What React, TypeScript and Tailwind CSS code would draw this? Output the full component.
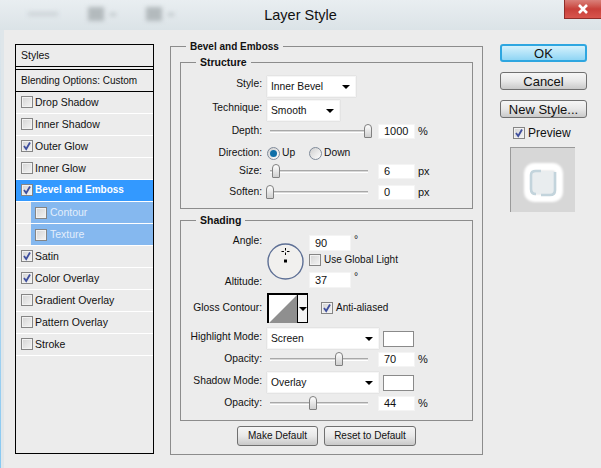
import type { ReactNode } from 'react';

const font = { fontFamily: '"Liberation Sans", Arial, sans-serif' };

const Check = ({ on = false }: { on?: boolean }) => (
  <span className="flex h-[12px] w-[12px] shrink-0 items-center justify-center border border-[#858585] bg-gradient-to-br from-[#d4d4d4] to-[#f4f4f4] shadow-[inset_0_0_0_1px_#f2f2f2]">
    {on && (
      <svg viewBox="0 0 10 10" className="h-[10px] w-[10px]">
        <path d="M2 5 L4.2 8 L8 1.5" fill="none" stroke="#3f4f9e" strokeWidth="1.8" />
      </svg>
    )}
  </span>
);

const StyleRow = ({ label, on, kind }: { label: string; on?: boolean; kind?: 'active' | 'sub' }) => {
  if (kind === 'sub') {
    return (
      <div className="h-[22px] border-b border-white pl-[15px]">
        <div className="flex h-[21px] items-center gap-[3px] bg-[#85b8ef] pl-[4px] text-[#e3eefb]">
          <Check />
          <span>{label}</span>
        </div>
      </div>
    );
  }
  return (
    <div
      className={
        kind === 'active'
          ? 'flex h-[22px] items-center gap-[2px] border-b border-white bg-[#3399ff] pb-[1px] pl-[5px] text-[10px] font-bold text-white'
          : 'flex h-[22px] items-center gap-[2px] border-b border-white pb-[1px] pl-[5px]'
      }
    >
      <Check on={on} />
      <span>{label}</span>
    </div>
  );
};

const Panel = ({ title, className, children, titleSize = 'text-[10.5px]' }: { title: string; className: string; children: ReactNode; titleSize?: string }) => (
  <div className={`border border-[#8c8c8c] ${className}`}>
    <div className={`ml-[15px] -mt-[8px] h-[15px] w-fit bg-[#ececec] px-[4px] font-bold leading-[15px] ${titleSize}`}>{title}</div>
    {children}
  </div>
);

const Label = ({ children, className = '' }: { children: ReactNode; className?: string }) => (
  <span className={`mr-[5px] w-[81px] shrink-0 whitespace-nowrap text-right ${className}`}>{children}</span>
);

const Arrow = () => (
  <svg viewBox="0 0 8 4" className="h-[4px] w-[8px] shrink-0">
    <path d="M0 0 H8 L4 4 Z" fill="#000" />
  </svg>
);

const Select = ({ value, className }: { value: string; className: string }) => (
  <div className={`flex items-center justify-between border border-[#f6f6f6] bg-white pl-[3px] pr-[5px] pt-[1px] shadow-[0_0_1px_#bbb] ${className}`}>
    <span>{value}</span>
    <Arrow />
  </div>
);

const NumberBox = ({ value, className = 'ml-[10px] w-[37px]' }: { value: string; className?: string }) => (
  <div className={`flex h-[15px] items-center border border-[#f4f4f4] bg-white pl-[5px] text-[11px] ${className}`}>{value}</div>
);

const Slider = ({ percent }: { percent: number }) => (
  <div className="relative ml-[3px] h-[3px] w-[98px] border-y border-y-[#a8a8a8] border-b-white bg-[#d8d8d8]">
    <span
      className="absolute -top-[7px] h-[14px] w-[8px] -translate-x-1/2 rounded-t-[4px] rounded-b-[1px] border border-[#808080] bg-gradient-to-b from-white to-[#cfcfcf]"
      style={{ left: `${percent}%` }}
    />
  </div>
);

const SliderRow = ({ label, percent, value, unit, className }: { label: string; percent: number; value: string; unit: string; className: string }) => (
  <div className={`flex h-[15px] items-center ${className}`}>
    <Label>{label}</Label>
    <Slider percent={percent} />
    <NumberBox value={value} />
    <span className="ml-[3px] text-[11px]">{unit}</span>
  </div>
);

const Radio = ({ on = false }: { on?: boolean }) => (
  <span className="flex h-[13px] w-[13px] items-center justify-center rounded-full border border-[#7f8a99] bg-gradient-to-br from-[#cfcfcf] to-white">
    {on && <span className="h-[7px] w-[7px] rounded-full bg-[#0f6fa8]" />}
  </span>
);

const PushButton = ({ children, className, primary }: { children: ReactNode; className: string; primary?: boolean }) => (
  <div
    className={
      primary
        ? `flex items-center justify-center rounded-[3px] border-2 border-[#2ea6e0] bg-gradient-to-b from-[#d4f1fc] to-[#8fd5f4] ${className}`
        : `flex items-center justify-center rounded-[3px] border border-[#707070] bg-gradient-to-b from-[#f6f6f6] via-[#e8e8e8] to-[#c9c9c9] ${className}`
    }
  >
    {children}
  </div>
);

export default function App() {
  return (
    <div className="flex h-[468px] w-[601px] flex-col overflow-hidden bg-[#dfe6ea] text-[10.3px] leading-none text-[#111]" style={font}>
      <div className="relative flex h-[30px] shrink-0 items-center justify-center bg-gradient-to-b from-[#e9eef1] to-[#dbe3e7] text-[14.5px]">
        <div className="absolute left-[28px] top-[7px] flex items-center gap-[30px] blur-[2px]">
          <span className="h-[4px] w-[30px] bg-[#ccd3d7]" />
          <span className="h-[14px] w-[16px] bg-[#b3babd]" />
          <span className="-ml-[24px] h-[3px] w-[6px] bg-[#bcc4c8]" />
          <span className="h-[14px] w-[16px] bg-[#b3babd]" />
          <span className="-ml-[24px] h-[3px] w-[6px] bg-[#bcc4c8]" />
        </div>
        <span>Layer Style</span>
        <div className="absolute right-0 top-0 flex h-[19px] w-[37px] items-center justify-center border-b border-l border-[#8f2e2a] bg-gradient-to-b from-[#d9807a] via-[#c8403a] to-[#d8554d]">
          <svg viewBox="0 0 12 10" className="h-[10px] w-[12px]">
            <path d="M2 1 L10 9 M10 1 L2 9" stroke="#fff" strokeWidth="2.6" />
          </svg>
        </div>
      </div>

      <div className="flex flex-1 bg-gradient-to-b from-[#dfe6ea] to-[#86c8f2] pl-[1px]">
        <div className="flex flex-1 border-l-[3px] border-[#dfe6ea] bg-[#ececec] pl-[11px]">
          <div className="mt-[14px] h-[410px] w-[139px] shrink-0 border border-black text-[10.5px]">
            <div className="flex h-[22px] items-center border-b border-black pl-[5px]">Styles</div>
            <div className="mt-[2px] flex h-[23px] items-center whitespace-nowrap border-y border-black pl-[5px] text-[10px]">Blending Options: Custom</div>
            <StyleRow label="Drop Shadow" />
            <StyleRow label="Inner Shadow" />
            <StyleRow label="Outer Glow" on />
            <StyleRow label="Inner Glow" />
            <StyleRow label="Bevel and Emboss" on kind="active" />
            <StyleRow label="Contour" kind="sub" />
            <StyleRow label="Texture" kind="sub" />
            <StyleRow label="Satin" on />
            <StyleRow label="Color Overlay" on />
            <StyleRow label="Gradient Overlay" />
            <StyleRow label="Pattern Overlay" />
            <StyleRow label="Stroke" />
          </div>

          <Panel title="Bevel and Emboss" titleSize="text-[10px]" className="ml-[16px] mt-[16px] h-[409px] w-[313px] shrink-0 border-b">
            <div className="ml-[9px] mt-[8px] w-[293px]">
              <Panel title="Structure" className="h-[147px]">
                <div className="mt-[6px] flex h-[21px] items-center">
                  <Label className="mb-[4px]">Style:</Label>
                  <Select value="Inner Bevel" className="h-[21px] w-[89px]" />
                </div>
                <div className="mt-[3px] flex h-[21px] items-center">
                  <Label className="mb-[4px]">Technique:</Label>
                  <Select value="Smooth" className="h-[21px] w-[73px]" />
                </div>
                <SliderRow label="Depth:" percent={100} value="1000" unit="%" className="mt-[3px]" />
                <div className="mt-[6px] flex h-[16px] items-center">
                  <Label>Direction:</Label>
                  <Radio on />
                  <span className="ml-[2px] w-[27px]">Up</span>
                  <Radio />
                  <span className="ml-[2px]">Down</span>
                </div>
                <SliderRow label="Size:" percent={6} value="6" unit="px" className="mt-[3px]" />
                <SliderRow label="Soften:" percent={0} value="0" unit="px" className="mt-[6px]" />
              </Panel>

              <Panel title="Shading" className="mt-[11px] h-[201px]">
                <div className="mt-[7px] flex h-[53px]">
                  <div className="mr-[4px] flex w-[81px] flex-col justify-between py-[1px] text-right">
                    <span>Angle:</span>
                    <span>Altitude:</span>
                  </div>
                  <svg viewBox="0 0 37 37" className="ml-[1px] mt-[8px] h-[37px] w-[37px] shrink-0">
                    <circle cx="18.5" cy="18.5" r="17.5" fill="#f1f0ee" stroke="#5d6f95" strokeWidth="1.4" />
                    <path d="M18.5 5v2.5M18.5 9.5v2.5M14.5 8.5h2.5M20 8.5h2.5" stroke="#000" strokeWidth="1" />
                    <rect x="17" y="16.5" width="3" height="3" fill="#000" />
                  </svg>
                  <div className="ml-[5px] flex flex-col">
                    <div className="flex items-start">
                      <NumberBox value="90" className="h-[16px] w-[42px]" />
                      <span className="ml-[3px]">°</span>
                    </div>
                    <div className="mt-[3px] flex items-center gap-[3px] text-[10px]">
                      <Check />
                      <span>Use Global Light</span>
                    </div>
                    <div className="mt-[6px] flex items-start">
                      <NumberBox value="37" className="h-[16px] w-[42px]" />
                      <span className="ml-[3px]">°</span>
                    </div>
                  </div>
                </div>
                <div className="mt-[5px] flex h-[30px] items-center">
                  <Label>Gloss Contour:</Label>
                  <div className="flex h-[30px] w-[41px] border-l-2 border-t-2 border-black bg-white">
                    <svg viewBox="0 0 28 28" className="h-[28px] w-[28px] shrink-0" preserveAspectRatio="none">
                      <path d="M0 28 L28 0 V28 Z" fill="#8f8f8f" />
                    </svg>
                    <div className="flex flex-1 items-center justify-center border-b border-l border-r border-black bg-[#f4f4f4]">
                      <Arrow />
                    </div>
                  </div>
                  <span className="ml-[13px]"><Check on /></span>
                  <span className="ml-[3px] text-[10px]">Anti-aliased</span>
                </div>
                <div className="mt-[5px] flex h-[21px] items-center">
                  <Label className="mb-[3px]">Highlight Mode:</Label>
                  <Select value="Screen" className="h-[21px] w-[112px]" />
                  <span className="ml-[4px] h-[16px] w-[31px] border border-[#8a8a8a] bg-white" />
                </div>
                <SliderRow label="Opacity:" percent={70} value="70" unit="%" className="mt-[3px]" />
                <div className="mt-[5px] flex h-[21px] items-center">
                  <Label className="mb-[3px]">Shadow Mode:</Label>
                  <Select value="Overlay" className="h-[21px] w-[112px]" />
                  <span className="ml-[4px] h-[16px] w-[31px] border border-[#8a8a8a] bg-white" />
                </div>
                <SliderRow label="Opacity:" percent={44} value="44" unit="%" className="mt-[3px]" />
              </Panel>

              <div className="ml-[57px] mt-[5px] flex gap-[6px] text-[10px]">
                <PushButton className="h-[20px] w-[81px]">Make Default</PushButton>
                <PushButton className="h-[20px] w-[92px]">Reset to Default</PushButton>
              </div>
            </div>
          </Panel>

          <div className="ml-[17px] mt-[14px] flex w-[87px] shrink-0 flex-col text-[13px]">
            <PushButton primary className="h-[18px]">OK</PushButton>
            <PushButton className="mt-[10px] h-[18px]">Cancel</PushButton>
            <PushButton className="mt-[10px] h-[18px]">New Style...</PushButton>
            <div className="ml-[13px] mt-[9px] flex h-[12px] items-center gap-[3px] text-[12px]">
              <Check on />
              <span>Preview</span>
            </div>
            <div className="ml-[10px] mt-[8px] h-[65px] w-[65px] border-l border-t border-[#9a9a9a] bg-[#d7d7d7]">
              <svg viewBox="0 0 64 64" className="h-[64px] w-[64px]">
                <defs>
                  <filter id="glow" x="-30%" y="-30%" width="160%" height="160%">
                    <feGaussianBlur stdDeviation="1" />
                  </filter>
                </defs>
                <rect x="17" y="19" width="31" height="31" rx="6" fill="none" stroke="#fff" strokeWidth="8" filter="url(#glow)" />
                <rect x="21" y="23" width="23" height="23" rx="3" fill="#e9edef" />
                <path d="M25 46 Q20 46 20 41 V27 Q20 23 25 23 H30 M30 47 H39 Q44 47 44 42 V24" fill="none" stroke="#c3d4dc" strokeWidth="2.6" />
              </svg>
            </div>
          </div>
        </div>
      </div>
    </div>
  );
}
